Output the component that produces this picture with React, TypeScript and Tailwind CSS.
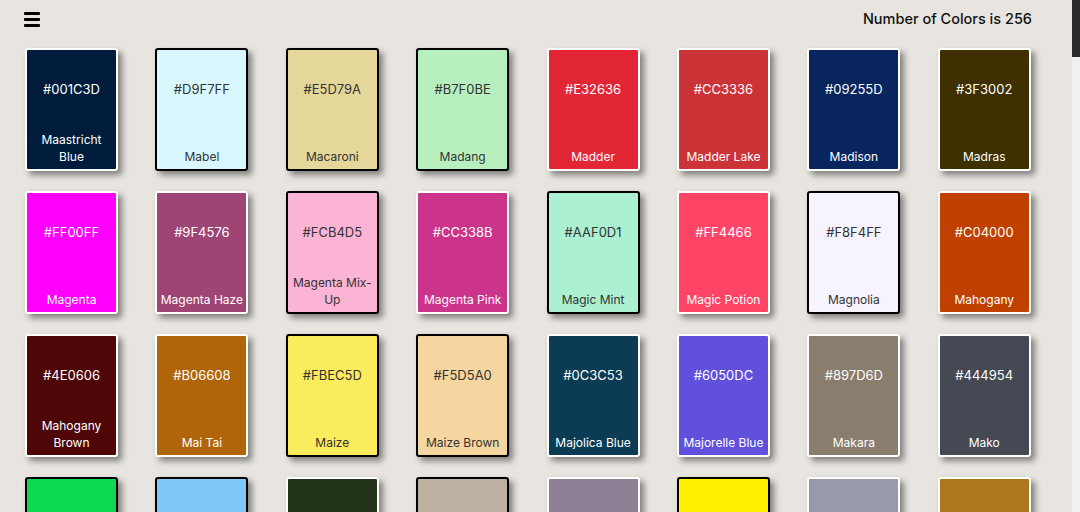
type Swatch = { hex: string; name: string; light?: boolean };

const named: Swatch[] = [
  { hex: "#001C3D", name: "Maastricht Blue" },
  { hex: "#D9F7FF", name: "Mabel", light: true },
  { hex: "#E5D79A", name: "Macaroni", light: true },
  { hex: "#B7F0BE", name: "Madang", light: true },
  { hex: "#E32636", name: "Madder" },
  { hex: "#CC3336", name: "Madder Lake" },
  { hex: "#09255D", name: "Madison" },
  { hex: "#3F3002", name: "Madras" },
  { hex: "#FF00FF", name: "Magenta" },
  { hex: "#9F4576", name: "Magenta Haze" },
  { hex: "#FCB4D5", name: "Magenta Mix-Up", light: true },
  { hex: "#CC338B", name: "Magenta Pink" },
  { hex: "#AAF0D1", name: "Magic Mint", light: true },
  { hex: "#FF4466", name: "Magic Potion" },
  { hex: "#F8F4FF", name: "Magnolia", light: true },
  { hex: "#C04000", name: "Mahogany" },
  { hex: "#4E0606", name: "Mahogany Brown" },
  { hex: "#B06608", name: "Mai Tai" },
  { hex: "#FBEC5D", name: "Maize", light: true },
  { hex: "#F5D5A0", name: "Maize Brown", light: true },
  { hex: "#0C3C53", name: "Majolica Blue" },
  { hex: "#6050DC", name: "Majorelle Blue" },
  { hex: "#897D6D", name: "Makara" },
  { hex: "#444954", name: "Mako" },
  { hex: "#0BDA51", name: "Malachite", light: true },
  { hex: "#7DC8F7", name: "Malibu", light: true },
  { hex: "#233418", name: "Mallard" },
  { hex: "#BDB2A1", name: "Malta", light: true },
  { hex: "#8E8196", name: "Mamba" },
  { hex: "#FFF200", name: "Manaus Yellow", light: true },
  { hex: "#979AAA", name: "Manatee" },
  { hex: "#AD781B", name: "Mandalay" },
];

// the rest of the list lives below the fold; fill it so the page scrolls as far
const toHex = (n: number) => n.toString(16).padStart(2, "0").toUpperCase();
const rest: Swatch[] = Array.from({ length: 256 - named.length }, (_, i) => {
  const r = (i * 53 + 40) % 256;
  const g = (i * 97 + 90) % 256;
  const b = (i * 31 + 150) % 256;
  const light = 0.299 * r + 0.587 * g + 0.114 * b > 160;
  return { hex: `#${toHex(r)}${toHex(g)}${toHex(b)}`, name: `Color ${named.length + i + 1}`, light };
});

const colors = [...named, ...rest];

function Card({ c }: { c: Swatch }) {
  return (
    <div
      className={`flex h-[123px] w-[93px] flex-col items-center rounded-[3px] border-2 text-center shadow-[4px_4px_6px_rgba(0,0,0,0.45)] ${
        c.light ? "border-black text-[#333333]" : "border-white text-white"
      }`}
      style={{ backgroundColor: c.hex }}
    >
      <p className="pt-[29px] text-[13px] leading-5">{c.hex}</p>
      <p className="mt-auto px-[1px] pb-[4px] text-[12px] leading-[17px]">{c.name}</p>
    </div>
  );
}

export default function App() {
  return (
    <div className="flex h-screen bg-[#e8e5e0] font-['Inter','DejaVu_Sans',sans-serif]">
      <div className="w-[1072px] shrink-0 overflow-y-auto [scrollbar-width:none]">
        <header className="flex h-[38px] items-center justify-between pl-[24px] pr-[40px]">
          <button className="flex w-[16px] flex-col gap-[3px]">
            <span className="h-[3px] w-full rounded-[1px] bg-black" />
            <span className="h-[3px] w-full rounded-[1px] bg-black" />
            <span className="h-[3px] w-full rounded-[1px] bg-black" />
          </button>
          <h2 className="text-[14.5px] font-medium text-[#111111]">Number of Colors is {colors.length}</h2>
        </header>
        <main className="grid grid-cols-[repeat(8,93px)] gap-x-[37.4px] gap-y-[20px] pb-8 pl-[25px] pt-[10px]">
          {colors.map((c) => (
            <Card key={c.name} c={c} />
          ))}
        </main>
      </div>
      {/* page scrollbar */}
      <aside className="w-2 bg-[#f1f1f1]">
        <div className="h-[57px] bg-[#2b2b2b]" />
      </aside>
    </div>
  );
}
